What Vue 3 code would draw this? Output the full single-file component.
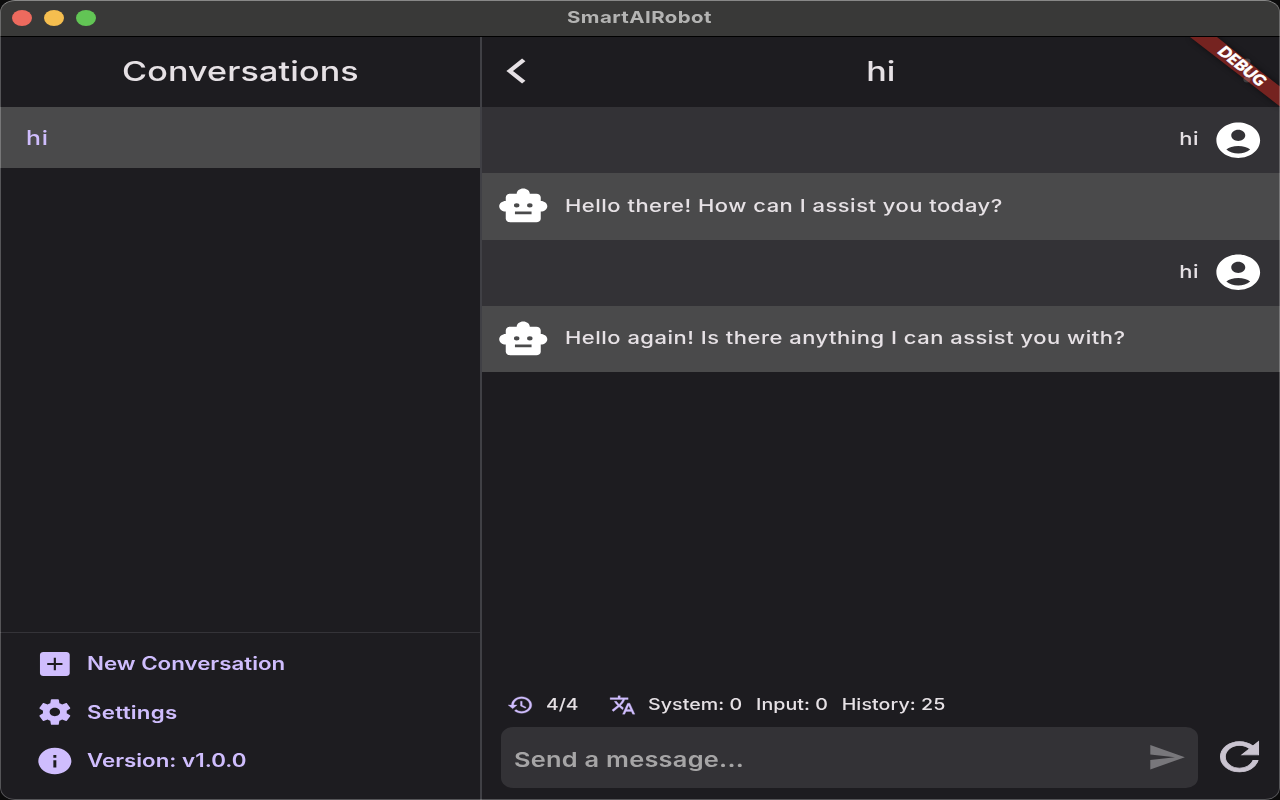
<script setup>
const messages = [
  { from: 'user', text: 'hi' },
  { from: 'bot', text: 'Hello there! How can I assist you today?' },
  { from: 'user', text: 'hi' },
  { from: 'bot', text: 'Hello again! Is there anything I can assist you with?' },
]

const actions = [
  {
    label: 'New Conversation',
    cls: 'a-new',
    d: 'M19 3H5c-1.11 0-2 .9-2 2v14c0 1.1.89 2 2 2h14c1.1 0 2-.9 2-2V5c0-1.1-.9-2-2-2zM16.600 12.750h-3.950v3.850h-1.300v-3.850H7.400v-1.500h3.950V7.400h1.300v3.850h3.950v1.500z',
  },
  {
    label: 'Settings',
    cls: 'a-settings',
    d: 'M19.14 12.94c.04-.3.06-.61.06-.94 0-.32-.02-.64-.07-.94l2.03-1.58c.18-.14.23-.41.12-.61l-1.92-3.32c-.12-.22-.37-.29-.59-.22l-2.39.96c-.5-.38-1.03-.7-1.62-.94l-.36-2.54c-.04-.24-.24-.41-.48-.41h-3.84c-.24 0-.43.17-.47.41l-.36 2.54c-.59.24-1.13.57-1.62.94l-2.39-.96c-.22-.08-.47 0-.59.22L2.74 8.87c-.12.21-.08.47.12.61l2.03 1.58c-.05.3-.09.63-.09.94s.02.64.07.94l-2.03 1.58c-.18.14-.23.41-.12.61l1.92 3.32c.12.22.37.29.59.22l2.39-.96c.5.38 1.03.7 1.62.94l.36 2.54c.05.24.24.41.48.41h3.84c.24 0 .44-.17.47-.41l.36-2.54c.59-.24 1.13-.56 1.62-.94l2.39.96c.22.08.47 0 .59-.22l1.92-3.32c.12-.22.07-.47-.12-.61l-2.01-1.58zM12 15.150c-1.740 0-3.150-1.410-3.150-3.150s1.410-3.150 3.150-3.150 3.150 1.410 3.150 3.150-1.410 3.150-3.150 3.150z',
  },
  {
    label: 'Version: v1.0.0',
    cls: 'a-version',
    d: 'M12 2C6.48 2 2 6.48 2 12s4.48 10 10 10 10-4.48 10-10S17.52 2 12 2zM12.900 16.800h-1.800v-5.400h1.800v5.400zM12.900 9.600h-1.800V7.500h1.800v2.100z',
  },
]
</script>

<template>
  <div class="window">
    <header class="titlebar">
      <div class="lights"><i class="red"></i><i class="yellow"></i><i class="green"></i></div>
      <span class="t window-title">SmartAIRobot</span>
    </header>

    <div class="body">
      <aside class="sidebar">
        <div class="bar"><span class="t heading">Conversations</span></div>
        <div class="conversation"><span class="t left conversation-name">hi</span></div>
        <nav class="actions">
          <div v-for="a in actions" :key="a.label" class="action">
            <svg class="action-icon" viewBox="0 0 24 24" preserveAspectRatio="none"><path :d="a.d" /></svg>
            <span class="t left action-label" :class="a.cls">{{ a.label }}</span>
          </div>
        </nav>
      </aside>

      <main class="chat">
        <div class="bar">
          <svg class="back" viewBox="0 0 16 26" preserveAspectRatio="none">
            <path d="M14.200 1.900 3 13 14.200 24.100" />
          </svg>
          <span class="t heading">hi</span>
        </div>

        <div v-for="(m, i) in messages" :key="i" class="message" :class="m.from">
          <svg v-if="m.from === 'bot'" class="avatar" viewBox="0 0 24 24" preserveAspectRatio="none">
            <path d="M20 9V7c0-1.1-.9-2-2-2h-3c0-1.66-1.34-3-3-3S9 3.34 9 5H6c-1.1 0-2 .9-2 2v2c-1.66 0-3 1.34-3 3s1.34 3 3 3v4c0 1.1.9 2 2 2h12c1.1 0 2-.9 2-2v-4c1.66 0 3-1.34 3-3s-1.34-3-3-3zM7.750 11.500a1.250 1.250 0 1 1 2.500 0a1.250 1.250 0 1 1-2.500 0zM15.800 16.500H8.200v-1.500h7.600v1.500zM13.750 11.500a1.250 1.250 0 1 1 2.500 0a1.250 1.250 0 1 1-2.500 0z" fill-rule="evenodd" />
          </svg>
          <span class="t message-text" :class="m.from === 'bot' ? 'left' : 'right'">{{ m.text }}</span>
          <svg v-if="m.from === 'user'" class="avatar" viewBox="0 0 24 24" preserveAspectRatio="none">
            <path d="M12 2C6.48 2 2 6.48 2 12s4.48 10 10 10 10-4.48 10-10S17.52 2 12 2zm0 4c1.800 0 3.200 1.430 3.200 3.200s-1.400 3.200-3.200 3.200S8.800 10.970 8.800 9.200s1.400-3.200 3.200-3.200zm0 13.500c-2.030 0-4.030-.700-5.440-2.280C7.750 15.900 9.680 15.200 12 15.200s4.250.700 5.440 2.020C16.030 18.800 14.030 19.500 12 19.500z" />
          </svg>
        </div>

        <div class="status">
          <svg class="status-icon" viewBox="0 0 24 24" preserveAspectRatio="none">
            <path d="M13 3c-4.970 0-9 4.030-9 9H1l3.890 3.890.070.140L9 12H6c0-3.870 3.130-7 7-7s7 3.130 7 7-3.130 7-7 7c-1.930 0-3.680-.790-4.940-2.060l-1.420 1.420C8.270 19.990 10.510 21 13 21c4.970 0 9-4.030 9-9s-4.030-9-9-9zm-1 5v5l4.280 2.540.720-1.210-3.500-2.080V8H12z" />
          </svg>
          <span class="t left count">4/4</span>
          <svg class="status-icon" viewBox="0 0 24 24" preserveAspectRatio="none">
            <path d="M12.870 15.070l-2.540-2.510.030-.030c1.740-1.940 2.980-4.170 3.710-6.530H17V4h-7V2H8v2H1v1.990h11.170C11.500 7.920 10.440 9.750 9 11.350 8.070 10.320 7.300 9.190 6.690 8h-2c.730 1.630 1.730 3.170 2.980 4.560l-5.090 5.020L4 19l5-5 3.110 3.110.760-2.040zM18.500 10h-2L12 22h2l1.120-3h4.750L21 22h2l-4.500-12zm-2.620 7l1.620-4.330L19.120 17h-3.240z" />
          </svg>
          <div class="t left tokens"><span>System: 0</span><span>Input: 0</span><span>History: 25</span></div>
        </div>

        <div class="composer">
          <div class="field">
            <span class="t left placeholder">Send a message...</span>
            <svg class="send" viewBox="0 0 24 24" preserveAspectRatio="none"><path d="M2.010 21L23 12 2.010 3 2 10l15 2-15 2z" /></svg>
          </div>
          <svg class="refresh" viewBox="0 0 24 24" preserveAspectRatio="none">
            <path d="M17.650 6.350C16.200 4.900 14.210 4 12 4c-4.420 0-7.990 3.580-7.990 8s3.570 8 7.990 8c3.730 0 6.840-2.550 7.730-6h-2.080c-.820 2.330-3.040 4-5.650 4-3.310 0-6-2.690-6-6s2.690-6 6-6c1.660 0 3.140.690 4.220 1.780L13 11h7V4l-2.350 2.350z" />
          </svg>
        </div>

        <svg class="banner" viewBox="0 0 110 90">
          <defs>
            <filter id="soft" x="-20%" y="-20%" width="140%" height="140%"><feGaussianBlur stdDeviation="3" /></filter>
          </defs>
          <path class="banner-shadow" d="M20 0H47L110 49V69Z" filter="url(#soft)" />
          <path class="banner-band" d="M20 0H47L110 49.500V69.500Z" />
          <g class="dots"><ellipse cx="77" cy="24.500" rx="3.600" ry="3" /><ellipse cx="77" cy="33.500" rx="3.600" ry="3" /><ellipse cx="77" cy="42.500" rx="3.600" ry="3" /></g>
          <text transform="translate(72 29) scale(1.240 1) rotate(45)" text-anchor="middle" y="4.800">DEBUG</text>
        </svg>
      </main>
    </div>
    <div class="frame"></div>
  </div>
</template>

<style>
body {
  background: #0c0c0c;
}
</style>

<style scoped>
* {
  box-sizing: border-box;
}
.window {
  position: relative;
  width: 1280px;
  height: 800px;
  overflow: hidden;
  display: flex;
  flex-direction: column;
  border-radius: 15px / 12px;
  background: #1d1c20;
  font-family: Inter, 'Liberation Sans', sans-serif;
  color: #e6e1e5;
}
/* hairline that outlines the rounded window */
.frame {
  position: absolute;
  inset: 0;
  border: 1px solid rgba(255, 255, 255, 0.25);
  border-top-color: rgba(255, 255, 255, 0.4);
  border-radius: 15px / 12px;
  pointer-events: none;
}
/* wide letterforms: glyphs are expanded along the x axis */
.t {
  display: inline-block;
  white-space: nowrap;
  line-height: 1;
  transform: scaleX(1.24);
}
.left {
  transform-origin: left center;
}
.right {
  transform-origin: right center;
}
.titlebar {
  display: grid;
  grid-template-columns: 1fr auto 1fr;
  align-items: center;
  height: 37px;
  padding-bottom: 1px;
  background: #393938;
  border-bottom: 1px solid #000;
}
.lights {
  display: flex;
  gap: 12px;
  padding-left: 12.400px;
}
.lights i {
  width: 20px;
  height: 16px;
  border-radius: 50%;
}
.red {
  background: #ed6a5e;
}
.yellow {
  background: #f5be4f;
}
.green {
  background: #62c555;
}
.window-title {
  font-size: 16.500px;
  font-weight: 700;
  letter-spacing: 0.350px;
  margin: 0 1px 1px 0;
  color: #b4b4b3;
}
.body {
  flex: 1;
  display: flex;
}
.sidebar {
  width: 480px;
  display: flex;
  flex-direction: column;
}
.bar {
  height: 70px;
  display: flex;
  align-items: center;
  justify-content: center;
}
.heading {
  font-size: 27.500px;
  font-weight: 450;
  letter-spacing: 0.100px;
}
.conversation {
  height: 61px;
  padding: 1px 0 0 26px;
  display: flex;
  align-items: center;
  background: #4a4a4b;
}
.conversation-name {
  font-size: 20px;
  font-weight: 500;
  letter-spacing: 0.600px;
  color: #cfbdfd;
}
.actions {
  margin-top: auto;
  height: 168px;
  padding: 7.200px 0 0 34.500px;
  border-top: 1px solid #343338;
  color: #cfbdfd;
}
.action {
  height: 48.400px;
  display: flex;
  align-items: center;
}
.action-icon {
  width: 39.700px;
  height: 32px;
  margin: -1px 12.800px 0 0;
  fill: #cfbdfd;
}
.action-label {
  font-size: 18px;
  font-weight: 590;
}
.a-settings {
  letter-spacing: 0.200px;
}
.chat {
  position: relative;
  flex: 1;
  display: flex;
  flex-direction: column;
  border-left: 2px solid #404045;
}
.chat .bar {
  position: relative;
}
.back {
  position: absolute;
  left: 24px;
  top: 21px;
  width: 20px;
  height: 26px;
  overflow: visible;
  fill: none;
  stroke: #e6e1e5;
  stroke-width: 3.800;
}
.message {
  height: 66.250px;
  display: flex;
  align-items: center;
}
.message.user {
  justify-content: flex-end;
  padding-right: 15.500px;
  background: #333236;
}
.message.bot {
  padding-left: 15px;
  background: #4a4a4b;
}
.avatar {
  width: 52.500px;
  height: 42.500px;
  fill: #fff;
}
.message-text {
  font-size: 17.700px;
  font-weight: 480;
  margin: 0 13px 2px 15px;
  letter-spacing: 0.410px;
}
.status {
  margin-top: auto;
  height: 45px;
  display: flex;
  align-items: center;
  padding-left: 24.500px;
}
.status-icon {
  width: 27px;
  height: 22px;
  fill: #cfbdfd;
  stroke: #cfbdfd;
  stroke-width: 0.300;
}
.count {
  width: 63px;
  margin: 1px 0 0 12.200px;
  font-size: 15.600px;
  font-weight: 500;
}
.tokens {
  display: flex;
  gap: 11px;
  margin: 1px 0 0 12px;
  font-size: 15.800px;
  font-weight: 500;
  letter-spacing: 0.060px;
}
.composer {
  height: 73px;
  display: flex;
  padding-left: 19px;
}
.field {
  width: 697px;
  height: 61px;
  display: flex;
  align-items: center;
  justify-content: space-between;
  padding: 0 12px 0 13px;
  border-radius: 12px / 10px;
  background: #333236;
}
.placeholder {
  font-size: 20.500px;
  font-weight: 600;
  letter-spacing: 0.190px;
  color: #a6a5a6;
  margin-top: 5px;
}
.send {
  width: 39.500px;
  height: 32.500px;
  fill: #78777b;
}
.refresh {
  width: 57px;
  height: 45.500px;
  margin: 7px 0 0 13px;
  fill: #cac4d0;
  stroke: #cac4d0;
  stroke-width: 0.450;
}
.banner {
  position: absolute;
  right: 0;
  top: 0;
  width: 110px;
  height: 90px;
}
.banner-shadow {
  fill: #000;
  opacity: 0.5;
}
.banner-band {
  fill: #752320;
}
.dots {
  fill: #fff;
  opacity: 0.16;
}
.banner text {
  font: 900 14px Lato, sans-serif;
  fill: #fff;
  stroke: #fff;
  stroke-width: 0.500;
}
</style>
